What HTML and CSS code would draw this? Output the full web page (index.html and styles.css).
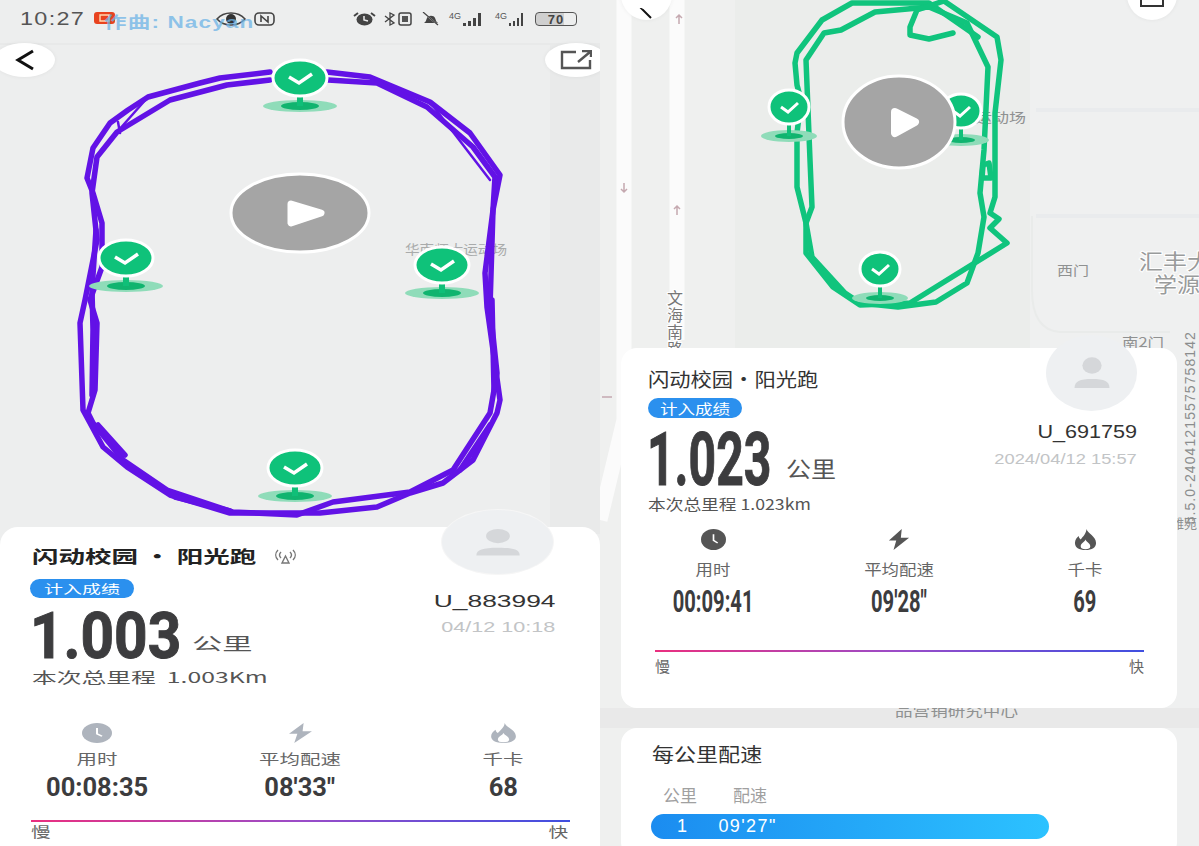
FILE: index.html
```html
<!DOCTYPE html>
<html lang="zh-CN">
<head>
    <meta charset="UTF-8">
    <title>闪动校园 阳光跑</title>
    <link rel="stylesheet" href="styles.css">
</head>
<body>
    <!-- shared icons and pins -->
    <svg class="defs" width="0" height="0">
        <symbol id="i-clock" viewBox="0 0 24 24" preserveAspectRatio="none">
            <circle cx="12" cy="12" r="12" fill="currentColor"/>
            <path d="M12 6v7l4 3" fill="none" stroke="#fff" stroke-width="1.6"/>
        </symbol>
        <symbol id="i-bolt" viewBox="0 0 24 24" preserveAspectRatio="none">
            <path d="M15 0 1 13h8L6 24 23 10h-9z" fill="currentColor"/>
        </symbol>
        <symbol id="i-flame" viewBox="0 0 24 24" preserveAspectRatio="none">
            <path fill-rule="evenodd" fill="currentColor" d="M13 0c1 5 10 8 10 16 0 5-4 8-11 8S1 21 1 16c0-4 2-6 4-8 0 2 1 3 2 4 2-3 6-7 6-12zM12 12c-1 3-5 4-5 8 0 2 2 3 5 3s5-1 5-3c0-4-4-5-5-8z"/>
        </symbol>
        <symbol id="i-person" viewBox="0 0 48 48" preserveAspectRatio="none">
            <circle cx="24" cy="14" r="11" fill="#d5d7da"/>
            <path d="M4 44c0-9 6-12 20-12s20 3 20 12z" fill="#d5d7da"/>
        </symbol>
        <symbol id="pin-l" viewBox="0 0 80 62" overflow="visible">
            <ellipse cx="40" cy="50" rx="37" ry="6" fill="#8fdcb9"/>
            <ellipse cx="40" cy="50" rx="19" ry="4" fill="#10b46f"/>
            <rect x="37" y="30" width="6" height="20" fill="#0fbf78"/>
            <ellipse cx="40" cy="22" rx="27" ry="18" fill="#0fc27a" stroke="#fff" stroke-width="3"/>
            <path d="M29 21l10 6 13-9" fill="none" stroke="#fff" stroke-width="3.5"/>
        </symbol>
        <symbol id="pin-r" viewBox="0 0 60 62" overflow="visible">
            <ellipse cx="30" cy="49" rx="28" ry="6" fill="#8fdcb9"/>
            <ellipse cx="30" cy="49" rx="14" ry="3" fill="#10b46f"/>
            <rect x="28" y="30" width="4" height="19" fill="#0fbf78"/>
            <ellipse cx="30" cy="20" rx="20" ry="17" fill="#0fc27a" stroke="#fff" stroke-width="3"/>
            <path d="M22 20l7 5 10-9" fill="none" stroke="#fff" stroke-width="3"/>
        </symbol>
    </svg>

    <main class="screens">
        <!-- Left phone -->
        <section class="phone phone-a">
            <svg class="map" width="600" height="540" viewBox="0 0 600 540">
                <rect x="550" y="44" width="50" height="490" fill="#e9eaea"/>
                <path d="M0 44H600" stroke="#e8e9e9" stroke-width="2"/>
                <text class="map-label" x="405" y="254" textLength="102" lengthAdjust="spacingAndGlyphs">华南师大运动场</text>
                <path class="track-a" d="M270 72 220 78 200 83 148 97 128 110 110 123 93 148 87 178 93 193 102 223 102 267 90 300 97 323 95 390 88 413 93 423 123 460 167 490 233 512 297 515 333 502 410 492 453 470 490 413 497 373 490 307 493 210 500 175 470 133 430 102 370 77 327 72"/>
                <path class="track-a" d="M270 80 227 85 170 100 117 132 97 157 92 193 97 240 85 300 80 323 83 410 103 447 127 467 170 495 230 513 320 513 377 507 410 493 443 483 473 460 497 413 500 400 487 307 485 273 493 210 495 177 473 147 427 107 377 83 328 80"/>
                <path class="track-a" d="M96 230 92 290 93 330 92 395M492 300 494 390M98 425 125 455M175 497 230 511M460 470 490 425"/>
                <path class="track-a thin" d="M118 122 120 133M148 97 110 140M430 102 490 180"/>
                <use href="#pin-l" x="260" y="56" width="80" height="62"/>
                <use href="#pin-l" x="86" y="236" width="80" height="62"/>
                <use href="#pin-l" x="402" y="243" width="80" height="62"/>
                <use href="#pin-l" x="255" y="446" width="80" height="62"/>
                <ellipse cx="300" cy="213" rx="69" ry="39" fill="#a5a5a5" stroke="#fff" stroke-width="3"/>
                <path d="M291 204 321 213 291 223z" fill="#fff" stroke="#fff" stroke-width="7" stroke-linejoin="round"/>
            </svg>

            <div class="status">
                <span class="clock">10:27</span>
                <svg class="st-app" viewBox="0 0 21 12"><rect width="21" height="12" rx="3" fill="#e8431f"/><path d="M6 3h9v6H6z" fill="none" stroke="#ffd9b0" stroke-width="1.4"/></svg>
                <svg class="st-eye" viewBox="0 0 30 14"><path d="M1 7c7-8 21-8 28 0-7 8-21 8-28 0z" fill="none" stroke="#444" stroke-width="1.6"/><circle cx="15" cy="7" r="5" fill="#333"/></svg>
                <svg class="st-nfc" viewBox="0 0 21 14"><rect x="1" y="1" width="19" height="12" rx="4" fill="none" stroke="#444" stroke-width="1.6"/><path d="M7 10V4l7 6V4" fill="none" stroke="#444" stroke-width="1.6"/></svg>
                <span class="st-right">
                    <svg class="st-alarm" viewBox="0 0 23 14"><ellipse cx="11.500" cy="7.500" rx="8" ry="6" fill="#444"/><path d="M11 4v4l4 1" fill="none" stroke="#eee" stroke-width="1.500"/><path d="M1 4l4-3M22 4l-4-3" stroke="#444" stroke-width="2"/></svg>
                    <svg class="st-bt" viewBox="0 0 29 14"><path d="M1 4l9 7-4 2V1l4 2-9 7" fill="none" stroke="#444" stroke-width="1.300"/><rect x="15" y="1" width="12" height="12" rx="2" fill="none" stroke="#444" stroke-width="1.500"/><rect x="18" y="4" width="6" height="6" fill="#555"/></svg>
                    <svg class="st-bell" viewBox="0 0 18 14"><path d="M2 11c2-1 2-3 3-5 1-3 7-3 8 0 1 2 1 4 3 5z" fill="#444"/><path d="M2 1l14 12" stroke="#eee" stroke-width="1.500"/><path d="M1 0l15 13" stroke="#444" stroke-width="1.200"/></svg>
                    <span class="st-sig"><small>4G</small><i class="b1"></i><i class="b2"></i><i class="b3"></i><i class="b4"></i></span>
                    <span class="st-sig st-sig-b"><small>4G</small><i class="b1"></i><i class="b2"></i><i class="b3"></i><i class="b4"></i></span>
                    <span class="st-batt">70</span>
                </span>
            </div>
            <span class="now-playing">作曲: Nacyan</span>

            <button class="map-btn back-a"><svg width="20" height="22" viewBox="0 0 20 22"><path d="M18 2 3 11l15 9" fill="none" stroke="#111" stroke-width="3"/></svg></button>
            <button class="map-btn share-a"><svg width="32" height="20" viewBox="0 0 32 20"><path d="M16 2H2v16h28v-8M18 12 30 2M22 1h9v6" fill="none" stroke="#555" stroke-width="2.400"/></svg></button>

            <div class="sheet">
                <div class="avatar avatar-a"><svg width="52" height="31"><use href="#i-person" width="52" height="31"/></svg></div>
                <div class="top-row">
                    <div class="info">
                        <h1 class="title"><span class="x-left">闪动校园 · 阳光跑</span></h1>
                        <svg class="radio" width="25" height="16" viewBox="0 0 25 16"><path d="M9 15l3.500-7 3.500 7zM5 2C2 5 2 9 5 12M20 2c3 3 3 7 0 10M8 4c-2 2-2 4 0 6M17 4c2 2 2 4 0 6" fill="none" stroke="#777" stroke-width="1.400"/></svg>
                        <div class="badge"><span>计入成绩</span></div>
                        <div class="dist">
                            <span class="big-box"><span class="big">1.003</span></span>
                            <span class="unit"><span>公里</span></span>
                        </div>
                        <div class="sub"><span>本次总里程&nbsp; 1.003Km</span></div>
                    </div>
                    <div class="who">
                        <div class="uid"><span>U_883994</span></div>
                        <div class="when"><span>04/12 10:18</span></div>
                    </div>
                </div>
                <div class="stats">
                    <div class="stat">
                        <svg class="ic ic-clock"><use href="#i-clock" width="100%" height="100%"/></svg>
                        <div class="label"><span>用时</span></div>
                        <div class="val"><span>00:08:35</span></div>
                    </div>
                    <div class="stat">
                        <svg class="ic ic-bolt"><use href="#i-bolt" width="100%" height="100%"/></svg>
                        <div class="label"><span>平均配速</span></div>
                        <div class="val"><span>08'33"</span></div>
                    </div>
                    <div class="stat">
                        <svg class="ic ic-flame"><use href="#i-flame" width="100%" height="100%"/></svg>
                        <div class="label"><span>千卡</span></div>
                        <div class="val"><span>68</span></div>
                    </div>
                </div>
                <div class="speed-line"></div>
                <div class="speed-ends"><span>慢</span><span>快</span></div>
            </div>
        </section>

        <!-- Right phone -->
        <section class="phone phone-b">
            <svg class="map" width="599" height="846" viewBox="600 0 599 846">
                <rect x="600" y="0" width="599" height="846" fill="#ebedeb"/>
                <rect x="600" y="0" width="135" height="846" fill="#eff0ef"/>
                <rect x="1030" y="0" width="169" height="846" fill="#eff0f0"/>
                <path d="M624 0V420L600 520M677 0V340" fill="none" stroke="#fbfbfb" stroke-width="15"/>
                <path d="M1036 110H1199M1036 216H1199" stroke="#e9ebed" stroke-width="4"/>
                <path d="M1032 216V290Q1032 330 1060 332H1170" fill="none" stroke="#e9ebea" stroke-width="2"/>
                <path d="M600 718H1199" stroke="#e9e9e9" stroke-width="20"/>
                <path d="M679 24v-9m-3 3 3-3 3 3M624 183v9m-3-3 3 3 3-3M677 215v-9m-3 3 3-3 3 3" fill="none" stroke="#c5a9b0" stroke-width="1.500"/>
                <path d="M612 397H602" stroke="#c5a9b0" stroke-width="1.500"/>
                <text class="map-label dark" x="975" y="122" textLength="51" lengthAdjust="spacingAndGlyphs">运动场</text>
                <text class="map-label dark" x="1057" y="275" textLength="32" lengthAdjust="spacingAndGlyphs">西门</text>
                <text class="map-title" x="1139" y="269" textLength="72" lengthAdjust="spacingAndGlyphs">汇丰大</text>
                <text class="map-title" x="1154" y="292" textLength="46" lengthAdjust="spacingAndGlyphs">学源</text>
                <text class="map-label dark" x="1122" y="347" textLength="42" lengthAdjust="spacingAndGlyphs">南2门</text>
                <text class="map-label dark" x="1171" y="528">雅苑</text>
                <text class="map-road" x="667" y="304">文</text>
                <text class="map-road" x="667" y="321">海</text>
                <text class="map-road" x="667" y="338">南</text>
                <text class="map-road" x="667" y="355">路</text>
                <text class="map-label wide dark" x="895" y="716" textLength="123" lengthAdjust="spacingAndGlyphs">品营销研究中心</text>
                <path class="track-b" d="M944 1 997 37 1001 60 995 113 995 197 990 213 999 219 990 228 1007 243 910 303 860 305 833 287 806 253 806 223 797 187 797 133 801 100 797 85 795 63 797 53 822 20 852 3 929 3 978 37"/>
                <path class="track-b" d="M929 7 967 23 988 67 984 150 980 193 984 217 978 253 967 283 936 302 898 307 860 303 845 293 812 257 806 223 812 207 810 160 806 60 824 33 841 30 875 12 929 7"/>
                <path class="track-b" d="M944 1 917 10 910 27 910 35 929 39 953 33"/>
                <path class="track-b" d="M983 165 982 178 991 178 989 163z"/>
                <use href="#pin-r" x="759" y="87" width="60" height="62"/>
                <use href="#pin-r" x="931" y="91" width="60" height="62"/>
                <use href="#pin-r" x="850" y="249" width="60" height="62"/>
                <ellipse cx="899" cy="122" rx="56" ry="46" fill="#a5a5a5" stroke="#fff" stroke-width="3"/>
                <path d="M895 112 915 122 895 133z" fill="#fff" stroke="#fff" stroke-width="8" stroke-linejoin="round"/>
            </svg>

            <span class="watermark">5.5.0-24041215575758142</span>

            <button class="map-btn back-b"><svg width="20" height="12" viewBox="0 0 20 12"><path d="M16-6 4 0l10 10" fill="none" stroke="#111" stroke-width="2"/></svg></button>
            <button class="map-btn share-b"><svg width="24" height="10" viewBox="0 0 24 10"><path d="M1 0v8h22V0" fill="none" stroke="#333" stroke-width="2"/></svg></button>

            <div class="card result-card">
                <div class="avatar avatar-b"><svg width="42" height="36"><use href="#i-person" width="42" height="36"/></svg></div>
                <div class="top-row">
                    <div class="info">
                        <h1 class="title"><span>闪动校园·阳光跑</span></h1>
                        <div class="badge"><span>计入成绩</span></div>
                        <div class="dist">
                            <span class="big-box"><span class="big">1.023</span></span>
                            <span class="unit"><span>公里</span></span>
                        </div>
                        <div class="sub"><span>本次总里程 1.023km</span></div>
                    </div>
                    <div class="who">
                        <div class="uid"><span>U_691759</span></div>
                        <div class="when"><span>2024/04/12 15:57</span></div>
                    </div>
                </div>
                <div class="stats">
                    <div class="stat">
                        <svg class="ic ic-clock"><use href="#i-clock" width="100%" height="100%"/></svg>
                        <div class="label"><span>用时</span></div>
                        <div class="val"><span>00:09:41</span></div>
                    </div>
                    <div class="stat">
                        <svg class="ic ic-bolt"><use href="#i-bolt" width="100%" height="100%"/></svg>
                        <div class="label"><span>平均配速</span></div>
                        <div class="val"><span>09'28"</span></div>
                    </div>
                    <div class="stat">
                        <svg class="ic ic-flame"><use href="#i-flame" width="100%" height="100%"/></svg>
                        <div class="label"><span>千卡</span></div>
                        <div class="val"><span>69</span></div>
                    </div>
                </div>
                <div class="speed-line"></div>
                <div class="speed-ends"><span>慢</span><span>快</span></div>
            </div>

            <div class="card pace-card">
                <h2><span>每公里配速</span></h2>
                <div class="pace-head"><span>公里</span><span>配速</span></div>
                <div class="pace-bar"><span>1</span><span>09'27"</span></div>
            </div>
        </section>
    </main>
</body>
</html>
```

FILE: styles.css
```css
* {
    box-sizing: border-box;
}

body {
    margin: 0;
    background: #fff;
    font-family: "Liberation Sans", "Noto Sans CJK SC", sans-serif;
    color: #333;
}

.defs {
    position: absolute;
}

.screens {
    display: grid;
    grid-template-columns: 600px 599px;
    height: 846px;
    overflow: hidden;
}

.phone {
    position: relative;
    height: 846px;
    overflow: hidden;
    display: flex;
    flex-direction: column;
}

.big,
.title span,
.badge span,
.unit span,
.sub span,
.uid span,
.when span,
.label span,
.val span,
.speed-ends span,
.pace-card h2 span {
    display: inline-block;
}

.phone-a {
    background: #edeeee;
}

.map {
    position: absolute;
    left: 0;
    top: 0;
}

.track-a {
    fill: none;
    stroke: #6212e6;
    stroke-width: 5.5;
    stroke-linejoin: round;
    stroke-linecap: round;
}

.track-a.thin {
    stroke-width: 2.5;
}

.track-b {
    fill: none;
    stroke: #10c47d;
    stroke-width: 5.5;
    stroke-linejoin: round;
    stroke-linecap: round;
}

.map-label {
    font-family: "Noto Sans CJK SC", sans-serif;
    font-size: 13px;
    fill: #a9abab;
}

.map-label.dark {
    fill: #8f9191;
}

.map-label.wide {
    font-size: 15px;
}

.map-title {
    font-family: "Noto Sans CJK SC", sans-serif;
    font-size: 21px;
    fill: #999b9b;
    stroke: #fff;
    stroke-width: 2px;
    paint-order: stroke;
}

.map-road {
    font-family: "Noto Sans CJK SC", sans-serif;
    font-size: 16px;
    fill: #777;
    stroke: #fff;
    stroke-width: 2px;
    paint-order: stroke;
}

/* status bar */
.status {
    position: relative;
    height: 38px;
    display: flex;
    align-items: center;
    padding-left: 20px;
    flex-shrink: 0;
}

.clock {
    width: 74px;
    font-size: 18px;
    letter-spacing: 1px;
    color: #555;
    transform: scaleX(1.3);
    transform-origin: left center;
}

.st-app {
    width: 21px;
    height: 12px;
    margin-top: -2px;
}

.st-eye {
    width: 30px;
    height: 14px;
    margin-left: 101px;
}

.st-nfc {
    width: 21px;
    height: 14px;
    margin-left: 8px;
}

.st-right {
    display: flex;
    align-items: center;
    margin-left: 78px;
}

.st-alarm {
    width: 23px;
    height: 14px;
}

.st-bt {
    width: 29px;
    height: 14px;
    margin-left: 8px;
}

.st-bell {
    width: 18px;
    height: 14px;
    margin-left: 9px;
}

.st-sig {
    display: flex;
    align-items: flex-end;
    gap: 2px;
    width: 38px;
    height: 14px;
    margin-left: 9px;
}

.st-sig-b {
    width: 32px;
    margin-left: 8px;
}

.st-sig small {
    font-size: 9px;
    line-height: 9px;
    align-self: flex-start;
    color: #555;
    width: 12px;
}

.st-sig i {
    display: block;
    width: 3px;
    background: #444;
}

.st-sig-b i {
    width: 2px;
}

.st-sig .b1 { height: 3px; }
.st-sig .b2 { height: 5px; }
.st-sig .b3 { height: 8px; }
.st-sig .b4 { height: 13px; }

.st-batt {
    width: 42px;
    height: 14px;
    margin-left: 8px;
    border: 1.5px solid #555;
    border-radius: 4px;
    display: flex;
    align-items: center;
    justify-content: center;
    background: linear-gradient(90deg, #cfcfcf 70%, transparent 70%);
    font-size: 13px;
    font-weight: bold;
    letter-spacing: 1px;
    color: #444;
}

.now-playing {
    position: absolute;
    left: 104px;
    top: 9px;
    font-size: 16px;
    font-weight: bold;
    letter-spacing: 0.8px;
    color: rgba(110, 180, 230, 0.75);
    transform: scaleX(1.41);
    transform-origin: left center;
}

/* map buttons */
.map-btn {
    position: absolute;
    padding: 0;
    border: 0;
    background: #fff;
    display: flex;
    align-items: center;
    justify-content: center;
    box-shadow: 0 0 4px rgba(0, 0, 0, 0.06);
}

.back-a {
    left: -6px;
    top: 43px;
    width: 61px;
    height: 34px;
    border-radius: 50%;
}

.share-a {
    left: 545px;
    top: 43px;
    width: 62px;
    height: 34px;
    border-radius: 50%;
}

.back-b {
    left: 21px;
    top: -30px;
    width: 51px;
    height: 50px;
    border-radius: 50%;
    align-items: flex-end;
}

.share-b {
    left: 527px;
    top: -30px;
    width: 50px;
    height: 50px;
    border-radius: 50%;
    align-items: flex-end;
    padding-bottom: 12px;
}

.avatar {
    position: absolute;
    border-radius: 50%;
    background: #eef0f2;
    display: flex;
    align-items: center;
    justify-content: center;
}

.watermark {
    position: absolute;
    left: 582px;
    top: 331px;
    writing-mode: vertical-rl;
    transform: rotate(180deg);
    font-size: 14px;
    letter-spacing: 1.1px;
    color: #8b8d8d;
}

/* shared sheet parts */
.top-row {
    display: flex;
    justify-content: space-between;
}

.info {
    position: relative;
}

.title {
    margin: 0;
    font-family: "Noto Sans CJK SC", sans-serif;
}

.badge {
    color: #fff;
    background: #2b90ee;
    display: flex;
    align-items: center;
    font-family: "Noto Sans CJK SC", sans-serif;
}

.dist {
    display: flex;
    align-items: flex-end;
}

.big-box {
    display: block;
}

.big {
    font-family: Roboto, sans-serif;
    font-weight: 700;
    color: #3c3c3e;
    transform-origin: left center;
    -webkit-text-stroke: 1px #3c3c3e;
}

.unit {
    font-family: "Noto Sans CJK SC", sans-serif;
    color: #555;
}

.sub {
    font-family: "Noto Sans CJK SC", sans-serif;
    white-space: nowrap;
    color: #555;
}

.who {
    text-align: right;
}

.uid,
.when {
    white-space: nowrap;
}

.uid span,
.when span {
    transform-origin: right center;
}

.when {
    color: #c2c4c6;
}

.stats {
    display: flex;
    justify-content: space-between;
}

.stat {
    width: 130px;
    display: flex;
    flex-direction: column;
    align-items: center;
}

.ic {
    display: block;
}

.label {
    font-family: "Noto Sans CJK SC", sans-serif;
    color: #666;
    white-space: nowrap;
}

.val {
    font-family: Roboto, sans-serif;
    font-weight: 700;
    color: #3c3c3e;
    white-space: nowrap;
}

.speed-line {
    height: 2px;
    background: linear-gradient(90deg, #ea2f7f, #9a4cc8 50%, #3f4fe0);
}

.speed-ends {
    display: flex;
    justify-content: space-between;
    font-family: "Noto Sans CJK SC", sans-serif;
    color: #666;
}

.speed-ends span {
    transform-origin: left center;
}

.speed-ends span:last-child {
    transform-origin: right center;
}

/* left phone */
.phone-a .sheet {
    position: relative;
    margin-top: auto;
    height: 319px;
    padding: 19px 30px 0 32px;
    background: #fff;
    border-radius: 18px 18px 0 0;
}

.avatar-a {
    left: 442px;
    top: -17px;
    width: 111px;
    height: 64px;
    box-shadow: 0 0 0 1px #f6f6f6;
}

.phone-a .title {
    height: 20px;
    font-size: 17px;
    line-height: 20px;
    font-weight: 700;
    color: #222;
}

.x-left {
    transform: scaleX(1.56);
    transform-origin: left center;
    white-space: nowrap;
}

.radio {
    position: absolute;
    left: 241px;
    top: 2px;
}

.phone-a .badge {
    width: 104px;
    height: 19px;
    margin: 13px 0 0 -2px;
    border-radius: 10px;
    padding-left: 14px;
    font-size: 12px;
}

.phone-a .badge span {
    transform: scaleX(1.58);
    transform-origin: left center;
    white-space: nowrap;
}

.phone-a .dist {
    height: 48px;
    margin-top: 13px;
}

.phone-a .big-box {
    width: 160px;
}

.phone-a .big {
    font-size: 65px;
    line-height: 48px;
    margin-left: -2px;
    transform: translateY(3px) scaleX(0.9);
}

.phone-a .unit {
    font-size: 17px;
    line-height: 24px;
    margin-bottom: 4px;
}

.phone-a .unit span {
    transform: scaleX(1.78);
    transform-origin: left center;
    white-space: nowrap;
}

.phone-a .sub {
    height: 20px;
    margin-top: 8px;
    font-size: 15px;
    line-height: 20px;
}

.phone-a .sub span {
    transform: scaleX(1.65);
    transform-origin: left center;
}

.phone-a .who {
    padding: 46px 15px 0 0;
}

.phone-a .uid {
    height: 20px;
    font-size: 17px;
    line-height: 20px;
    color: #333;
}

.phone-a .uid span {
    transform: scaleX(1.55);
}

.phone-a .when {
    height: 18px;
    margin-top: 6px;
    font-size: 15px;
    line-height: 18px;
}

.phone-a .when span {
    transform: scaleX(1.44);
}

.phone-a .stats {
    margin: 36px 2px 0 0;
}

.phone-a .ic {
    height: 20px;
    color: #aeb4bd;
}

.phone-a .ic-clock {
    width: 30px;
}

.phone-a .ic-bolt {
    width: 25px;
}

.phone-a .ic-flame {
    width: 27px;
}

.phone-a .label {
    height: 16px;
    margin-top: 7px;
    font-size: 14px;
    line-height: 16px;
}

.phone-a .label span {
    transform: scaleX(1.46);
}

.phone-a .val {
    height: 26px;
    margin-top: 9px;
    font-size: 25px;
    line-height: 26px;
}

.phone-a .val span {
    transform: scaleX(1.02);
}

.phone-a .speed-line {
    margin: 19px 0 0 -1px;
}

.phone-a .speed-ends {
    height: 16px;
    margin: 1px 2px 0 -1px;
    font-size: 14px;
    line-height: 16px;
}

.phone-a .speed-ends span {
    transform: scaleX(1.4);
}

/* right phone */
.phone-b {
    padding: 348px 22px 0 21px;
}

.card {
    position: relative;
    background: #fff;
    border-radius: 16px;
    flex-shrink: 0;
}

.result-card {
    height: 360px;
    padding: 21px 40px 0 27px;
}

.avatar-b {
    left: 425px;
    top: -13px;
    width: 91px;
    height: 76px;
}

.phone-b .title {
    height: 20px;
    font-size: 19px;
    line-height: 20px;
    font-weight: 400;
    color: #333;
}

.phone-b .title span {
    transform: scaleX(1.12);
    transform-origin: left center;
    white-space: nowrap;
}

.phone-b .badge {
    width: 94px;
    height: 20px;
    margin-top: 9px;
    border-radius: 10px;
    padding-left: 12px;
    font-size: 14px;
}

.phone-b .badge span {
    transform: scaleX(1.25);
    transform-origin: left center;
    white-space: nowrap;
}

.phone-b .dist {
    height: 60px;
    margin-top: 10px;
}

.phone-b .big-box {
    width: 138px;
}

.phone-b .big {
    font-size: 74px;
    line-height: 60px;
    margin-left: -1px;
    transform: translateY(2px) scaleX(0.65);
}

.phone-b .unit {
    font-size: 22px;
    line-height: 30px;
    margin-bottom: 6px;
}

.phone-b .unit span {
    transform: scaleX(1.14);
    transform-origin: left center;
    white-space: nowrap;
}

.phone-b .sub {
    height: 20px;
    margin-top: 6px;
    font-size: 15px;
    line-height: 20px;
}

.phone-b .sub span {
    transform: scaleX(1.18);
    transform-origin: left center;
}

.phone-b .who {
    padding-top: 52px;
}

.phone-b .uid {
    height: 22px;
    font-size: 18px;
    line-height: 22px;
}

.phone-b .uid span {
    transform: scaleX(1.2);
}

.phone-b .when {
    height: 20px;
    margin-top: 6px;
    font-size: 15px;
    line-height: 20px;
}

.phone-b .when span {
    transform: scaleX(1.22);
}

.phone-b .stats {
    margin: 15px 0 0 0;
    width: 502px;
    padding: 0;
}

.phone-b .ic {
    height: 21px;
    color: #555;
}

.phone-b .ic-clock {
    width: 25px;
}

.phone-b .ic-bolt {
    width: 22px;
}

.phone-b .ic-flame {
    width: 23px;
}

.phone-b .label {
    height: 18px;
    margin-top: 10px;
    font-size: 15px;
    line-height: 18px;
}

.phone-b .label span {
    transform: scaleX(1.16);
}

.phone-b .val {
    height: 28px;
    margin-top: 10px;
    font-size: 31px;
    line-height: 28px;
}

.phone-b .val span {
    transform: scaleX(0.65);
}

.phone-b .speed-line {
    margin: 34px -7px 0 7px;
}

.phone-b .speed-ends {
    height: 18px;
    margin: 5px -7px 0 7px;
    font-size: 15px;
    line-height: 18px;
}

.pace-card {
    height: 130px;
    margin-top: 20px;
    padding: 15px 0 0 31px;
}

.pace-card h2 {
    margin: 0;
    font-family: "Noto Sans CJK SC", sans-serif;
    font-size: 19px;
    line-height: 22px;
    font-weight: 400;
    color: #333;
}

.pace-card h2 span {
    transform: scaleX(1.16);
    transform-origin: left center;
    white-space: nowrap;
}

.pace-head {
    display: flex;
    gap: 36px;
    margin: 21px 0 0 11px;
    font-family: "Noto Sans CJK SC", sans-serif;
    font-size: 17px;
    line-height: 18px;
    color: #a0a0a0;
}

.pace-bar {
    display: flex;
    align-items: center;
    gap: 30px;
    width: 398px;
    height: 25px;
    margin: 10px 0 0 -1px;
    padding-left: 26px;
    border-radius: 13px;
    background: linear-gradient(90deg, #1b8cf0, #2cc2ff);
    color: #fff;
    font-size: 18px;
    letter-spacing: 1.4px;
}
```
